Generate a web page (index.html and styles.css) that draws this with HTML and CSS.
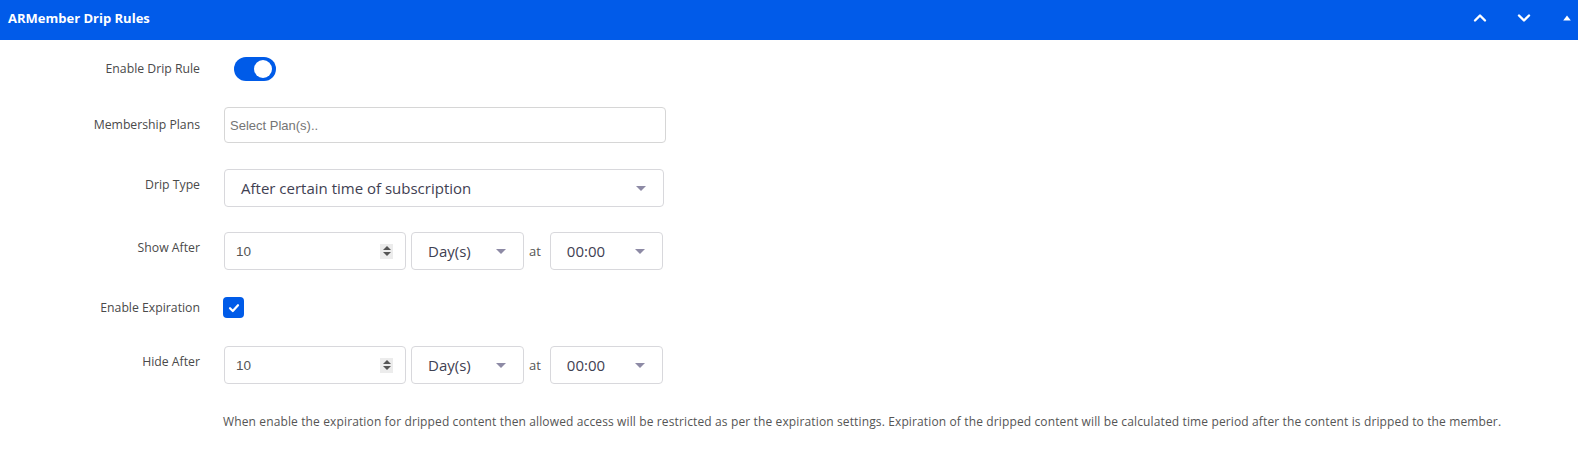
FILE: index.html
```html
<!DOCTYPE html>
<html>
<head>
<meta charset="utf-8">
<link rel="stylesheet" href="styles.css">
</head>
<body>
<div class="panel">
  <div class="panel-head">
    <span class="panel-title">ARMember Drip Rules</span>
    <div class="head-icons">
      <svg class="chev" width="14" height="10" viewBox="0 0 14 10"><path d="M2 7.5 L7 2.5 L12 7.5" fill="none" stroke="#fff" stroke-width="2.4" stroke-linecap="round" stroke-linejoin="round"/></svg>
      <svg class="chev" width="14" height="10" viewBox="0 0 14 10"><path d="M2 2.5 L7 7.5 L12 2.5" fill="none" stroke="#fff" stroke-width="2.4" stroke-linecap="round" stroke-linejoin="round"/></svg>
      <svg class="tri" width="8" height="6" viewBox="0 0 8 6"><path d="M4 0.5 L7.8 5.5 L0.2 5.5 Z" fill="#fff"/></svg>
    </div>
  </div>
  <div class="panel-body">
    <div class="row row-toggle">
      <div class="label">Enable Drip Rule</div>
      <div class="control"><span class="toggle"><span class="knob"></span></span></div>
    </div>
    <div class="row row-plans">
      <div class="label">Membership Plans</div>
      <div class="control"><div class="text-input"><span class="placeholder">Select Plan(s)..</span></div></div>
    </div>
    <div class="row row-type">
      <div class="label">Drip Type</div>
      <div class="control"><div class="select wide"><span>After certain time of subscription</span><i class="caret"></i></div></div>
    </div>
    <div class="row row-show">
      <div class="label">Show After</div>
      <div class="control group">
        <div class="num"><span>10</span><span class="spin"><i class="sup"></i><i class="sdown"></i></span></div>
        <div class="select small"><span>Day(s)</span><i class="caret"></i></div>
        <span class="at">at</span>
        <div class="select small"><span>00:00</span><i class="caret"></i></div>
      </div>
    </div>
    <div class="row row-exp">
      <div class="label">Enable Expiration</div>
      <div class="control"><span class="check"><svg width="12" height="10" viewBox="0 0 12 10"><path d="M2 5.2 L4.8 8 L10 2.2" fill="none" stroke="#fff" stroke-width="2.2" stroke-linecap="round" stroke-linejoin="round"/></svg></span></div>
    </div>
    <div class="row row-hide">
      <div class="label">Hide After</div>
      <div class="control group">
        <div class="num"><span>10</span><span class="spin"><i class="sup"></i><i class="sdown"></i></span></div>
        <div class="select small"><span>Day(s)</span><i class="caret"></i></div>
        <span class="at">at</span>
        <div class="select small"><span>00:00</span><i class="caret"></i></div>
      </div>
    </div>
    <p class="note">When enable the expiration for dripped content then allowed access will be restricted as per the expiration settings. Expiration of the dripped content will be calculated time period after the content is dripped to the member.</p>
  </div>
</div>
</body>
</html>
```

FILE: styles.css
```css
html, body {
  margin: 0;
  padding: 0;
  background: #fff;
}
body {
  font-family: "Open Sans", "Liberation Sans", sans-serif;
  color: #444;
}
.panel-head {
  height: 40px;
  background: #015be9;
  display: flex;
  align-items: center;
  justify-content: space-between;
  padding: 0 0 4px 8px;
  box-sizing: border-box;
}
.panel-title {
  color: #fff;
  font-weight: 700;
  font-size: 13px;
}
.head-icons {
  display: flex;
  align-items: center;
}
.chev {
  display: block;
  margin-right: 30px;
}
.chev + .chev {
  margin-right: 32px;
}
.tri {
  display: block;
  margin-right: 7px;
}
.panel-body {
  padding-top: 17px;
}
.row {
  display: flex;
  align-items: center;
}
.label {
  width: 200px;
  text-align: right;
  font-size: 12.25px;
  line-height: 16px;
  color: #4a4a4a;
  margin-bottom: 6px;
}
.row-toggle .label, .row-exp .label, .row-plans .label {
  margin-bottom: 0;
}
.control {
  margin-left: 24px;
}
.row-plans { margin-top: 26px; }
.row-type { margin-top: 26px; }
.row-show { margin-top: 25px; }
.row-exp { margin-top: 27px; }
.row-hide { margin-top: 28px; }

.toggle {
  display: block;
  width: 42px;
  height: 24px;
  border-radius: 12px;
  background: #005be8;
  margin-left: 10px;
  position: relative;
}
.knob {
  position: absolute;
  right: 4px;
  top: 3px;
  width: 18px;
  height: 18px;
  border-radius: 50%;
  background: #fff;
}
.text-input {
  width: 442px;
  height: 36px;
  border: 1px solid #d6d6d6;
  border-radius: 4px;
  box-sizing: border-box;
  display: flex;
  align-items: center;
  padding-left: 5px;
}
.placeholder {
  font-family: "Liberation Sans", Arial, sans-serif;
  font-size: 13px;
  color: #757575;
}
.select {
  height: 38px;
  border: 1px solid #d8d8dc;
  border-radius: 4px;
  box-sizing: border-box;
  display: flex;
  align-items: center;
  justify-content: space-between;
  padding: 0 17px 0 16px;
  font-family: "Open Sans", sans-serif;
  font-size: 15px;
  color: #3f4152;
}
.select.wide { width: 440px; }
.select.small { width: 113px; }
.caret {
  width: 0;
  height: 0;
  border-left: 5px solid transparent;
  border-right: 5px solid transparent;
  border-top: 5px solid #8d8aa5;
  margin-top: 1px;
}
.group {
  display: flex;
  align-items: center;
}
.num {
  width: 182px;
  height: 38px;
  border: 1px solid #d8d8dc;
  border-radius: 4px;
  box-sizing: border-box;
  display: flex;
  align-items: center;
  justify-content: space-between;
  padding: 0 12px 0 11px;
  font-family: "Liberation Sans", Arial, sans-serif;
  font-size: 13.5px;
  color: #555;
}
.spin {
  width: 13px;
  height: 15px;
  background: #ececec;
  display: flex;
  flex-direction: column;
  align-items: center;
  justify-content: center;
  gap: 2px;
}
.sup, .sdown {
  width: 0;
  height: 0;
  border-left: 4px solid transparent;
  border-right: 4px solid transparent;
}
.sup { border-bottom: 4px solid #555; }
.sdown { border-top: 4px solid #555; }
.num + .select { margin-left: 5px; }
.at {
  font-family: "Open Sans", sans-serif;
  font-size: 13px;
  color: #555;
  margin: 0 9px 0 5px;
}
.check {
  display: flex;
  align-items: center;
  justify-content: center;
  width: 21px;
  height: 21px;
  border-radius: 4px;
  background: #005be8;
  margin-left: -1px;
}
.note {
  margin: 30px 0 0 223px;
  font-size: 12px;
  line-height: 16px;
  color: #555;
  letter-spacing: 0.13px;
}
```
